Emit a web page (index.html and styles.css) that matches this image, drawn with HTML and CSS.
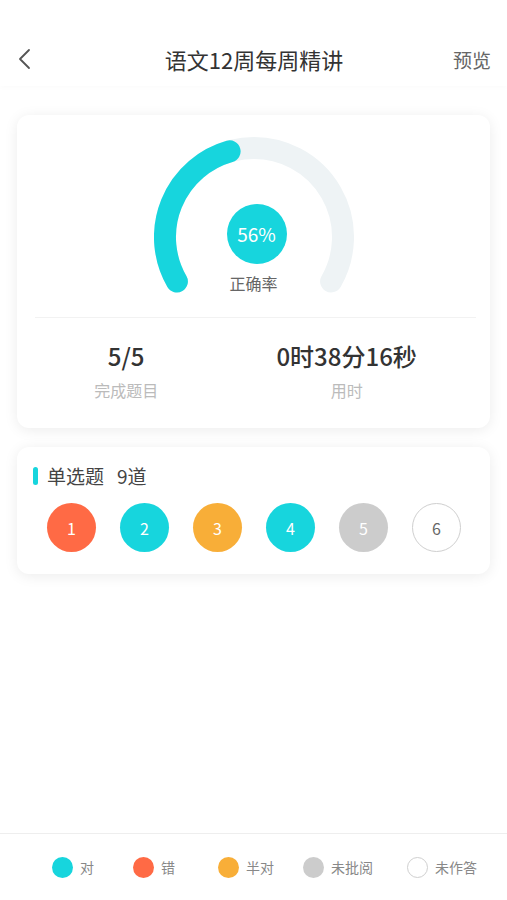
FILE: index.html
```html
<!DOCTYPE html>
<html lang="zh-CN">
<head>
  <meta charset="UTF-8">
  <title>语文12周每周精讲</title>
  <link rel="stylesheet" href="styles.css">
</head>
<body>
  <header class="topbar">
    <a class="back" href="#" aria-label="返回">
      <svg width="14" height="22" viewBox="0 0 14 22"><polyline points="12,2 3,11 12,20" fill="none" stroke="#555" stroke-width="1.8" stroke-linecap="round" stroke-linejoin="round"/></svg>
    </a>
    <h1 class="title">语文12周每周精讲</h1>
    <a class="preview" href="#">预览</a>
  </header>

  <main class="content">
    <!-- 正确率 -->
    <section class="card result">
      <div class="gauge">
        <svg width="200" height="160" viewBox="0 0 200 160">
          <path d="M22.9 144.5 A89 89 0 1 1 177.1 144.5" fill="none" stroke="#eef3f5" stroke-width="22" stroke-linecap="round"/>
          <path d="M22.9 144.5 A89 89 0 0 1 75.6 14.4" fill="none" stroke="#17d5dd" stroke-width="22" stroke-linecap="round"/>
        </svg>
        <div class="rate">56%</div>
        <div class="rate-label">正确率</div>
      </div>
      <div class="stats">
        <div class="stat">
          <div class="stat-value">5/5</div>
          <div class="stat-label">完成题目</div>
        </div>
        <div class="stat">
          <div class="stat-value">0时38分16秒</div>
          <div class="stat-label">用时</div>
        </div>
      </div>
    </section>

    <!-- 单选题 -->
    <section class="card questions">
      <div class="q-title"><span class="mark"></span>单选题<span class="count">9道</span></div>
      <div class="q-list">
        <span class="q wrong">1</span>
        <span class="q right">2</span>
        <span class="q half">3</span>
        <span class="q right">4</span>
        <span class="q unchecked">5</span>
        <span class="q empty">6</span>
      </div>
    </section>
  </main>

  <footer class="legend">
    <div class="legend-item"><span class="dot right"></span>对</div>
    <div class="legend-item"><span class="dot wrong"></span>错</div>
    <div class="legend-item"><span class="dot half"></span>半对</div>
    <div class="legend-item"><span class="dot unchecked"></span>未批阅</div>
    <div class="legend-item"><span class="dot empty"></span>未作答</div>
  </footer>
</body>
</html>
```

FILE: styles.css
```css
* {
  box-sizing: border-box;
}

body {
  margin: 0;
  height: 900px;
  font-family: "Noto Sans CJK SC", "Noto Sans", sans-serif;
  background: #fff;
  color: #333;
  display: flex;
  flex-direction: column;
}

/* 顶部导航 */
.topbar {
  height: 86px;
  padding: 32px 16px 0 17px;
  background: #fff;
  box-shadow: 0 1px 6px rgba(0,0,0,0.025);
  display: grid;
  grid-template-columns: 1fr auto 1fr;
  align-items: center;
}

.back {
  display: flex;
  align-items: center;
}

.title {
  margin: 0;
  font-size: 22px;
  font-weight: normal;
  color: #333;
}

.preview {
  justify-self: end;
  font-size: 19px;
  color: #666;
  text-decoration: none;
}

.content {
  flex: 1;
  padding: 29px 17px 0;
}

.card {
  background: #fff;
  border-radius: 12px;
  box-shadow: 0 2px 14px rgba(0,0,0,0.08);
}

/* 正确率卡片 */
.result {
  padding-top: 22px;
}

.gauge {
  position: relative;
  width: 200px;
  height: 180px;
  margin: 0 auto;
}

.gauge svg {
  display: block;
}

.rate {
  position: absolute;
  top: 67px;
  left: 73px;
  width: 60px;
  height: 60px;
  border-radius: 50%;
  background: #17d5dd;
  color: #fff;
  font-size: 19px;
  line-height: 60px;
  text-align: center;
}

.rate-label {
  position: absolute;
  top: 135px;
  left: 0;
  right: 0;
  text-align: center;
  font-size: 16px;
  line-height: 22px;
  color: #666;
}

.stats {
  margin: 0 14px 0 18px;
  border-top: 1px solid #f2f2f2;
  padding: 23px 0 27px;
  display: flex;
  justify-content: space-around;
}

.stat {
  text-align: center;
}

.stat-value {
  font-size: 24px;
  line-height: 30px;
  font-weight: 500;
  color: #333;
}

.stat-label {
  margin-top: 8px;
  font-size: 16px;
  line-height: 22px;
  color: #bbb;
}

/* 单选题卡片 */
.questions {
  margin-top: 19px;
  padding: 16px 16px 22px;
}

.q-title {
  display: flex;
  align-items: center;
  font-size: 19px;
  line-height: 26px;
  color: #444;
}

.mark {
  width: 5px;
  height: 18px;
  border-radius: 3px;
  background: #17d5dd;
  margin-right: 9px;
}

.count {
  margin-left: 13px;
}

.q-list {
  margin-top: 14px;
  padding-left: 14px;
  display: flex;
  gap: 24px;
}

.q {
  width: 49px;
  height: 49px;
  border-radius: 50%;
  display: flex;
  align-items: center;
  justify-content: center;
  font-size: 16px;
  color: #fff;
}

.right { background: #17d5dd; }
.wrong { background: #ff6a45; }
.half { background: #f8ae38; }
.unchecked { background: #cccccc; }
.empty {
  background: #fff;
  border: 1px solid #cfcfcf;
  color: #666;
}

/* 底部图例 */
.legend {
  height: 67px;
  border-top: 1px solid #eeeeee;
  background: #fff;
  padding-left: 52px;
  display: grid;
  grid-template-columns: 81px 85px 85px 104px auto;
  align-items: center;
}

.legend-item {
  display: flex;
  align-items: center;
  font-size: 14px;
  color: #888;
}

.dot {
  width: 21px;
  height: 21px;
  border-radius: 50%;
  margin-right: 7px;
}
```
